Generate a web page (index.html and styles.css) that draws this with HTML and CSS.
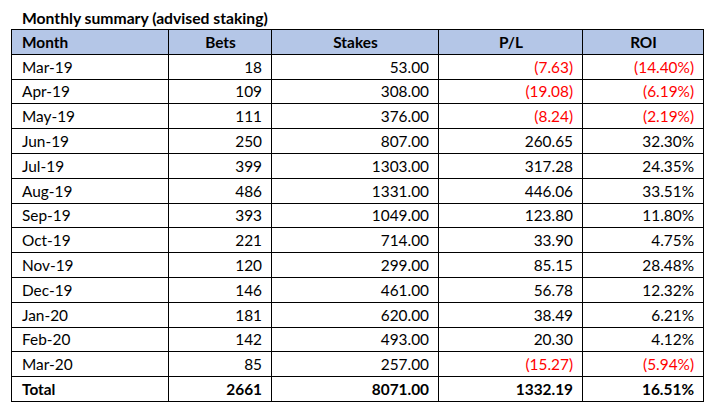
FILE: index.html
```html
<!DOCTYPE html>
<html>
<head>
<meta charset="utf-8">
<link rel="stylesheet" href="styles.css">
</head>
<body>
<div class="sheet">
  <div class="title">Monthly summary (advised staking)</div>
  <div class="table">
    <div class="c h">Month</div><div class="c h">Bets</div><div class="c h">Stakes</div><div class="c h">P/L</div><div class="c h">ROI</div>
    <div class="c l">Mar-19</div><div class="c">18</div><div class="c">53.00</div><div class="c neg">(7.63)</div><div class="c neg">(14.40%)</div>
    <div class="c l">Apr-19</div><div class="c">109</div><div class="c">308.00</div><div class="c neg">(19.08)</div><div class="c neg">(6.19%)</div>
    <div class="c l">May-19</div><div class="c">111</div><div class="c">376.00</div><div class="c neg">(8.24)</div><div class="c neg">(2.19%)</div>
    <div class="c l">Jun-19</div><div class="c">250</div><div class="c">807.00</div><div class="c">260.65</div><div class="c">32.30%</div>
    <div class="c l">Jul-19</div><div class="c">399</div><div class="c">1303.00</div><div class="c">317.28</div><div class="c">24.35%</div>
    <div class="c l">Aug-19</div><div class="c">486</div><div class="c">1331.00</div><div class="c">446.06</div><div class="c">33.51%</div>
    <div class="c l">Sep-19</div><div class="c">393</div><div class="c">1049.00</div><div class="c">123.80</div><div class="c">11.80%</div>
    <div class="c l">Oct-19</div><div class="c">221</div><div class="c">714.00</div><div class="c">33.90</div><div class="c">4.75%</div>
    <div class="c l">Nov-19</div><div class="c">120</div><div class="c">299.00</div><div class="c">85.15</div><div class="c">28.48%</div>
    <div class="c l">Dec-19</div><div class="c">146</div><div class="c">461.00</div><div class="c">56.78</div><div class="c">12.32%</div>
    <div class="c l">Jan-20</div><div class="c">181</div><div class="c">620.00</div><div class="c">38.49</div><div class="c">6.21%</div>
    <div class="c l">Feb-20</div><div class="c">142</div><div class="c">493.00</div><div class="c">20.30</div><div class="c">4.12%</div>
    <div class="c l">Mar-20</div><div class="c">85</div><div class="c">257.00</div><div class="c neg">(15.27)</div><div class="c neg">(5.94%)</div>
    <div class="c l b">Total</div><div class="c b">2661</div><div class="c b">8071.00</div><div class="c b">1332.19</div><div class="c b">16.51%</div>
  </div>
</div>
</body>
</html>
```

FILE: styles.css
```css
html, body {
  margin: 0;
  padding: 0;
  background: #ffffff;
}
body {
  font-family: "Lato", "Open Sans", sans-serif;
  color: #000000;
  font-size: 15.4px;
}
.sheet {
  padding: 8px 0 0 11px;
}
.title {
  font-weight: bold;
  font-size: 15.7px;
  padding-left: 11px;
  height: 21px;
  line-height: 20px;
}
.table {
  display: grid;
  grid-template-columns: 156px 102px 166px 143px 120px;
  grid-auto-rows: 23.8px;
  gap: 1px;
  padding: 1px;
  background: #000000;
  width: max-content;
}
.c {
  background: #ffffff;
  display: flex;
  align-items: center;
  justify-content: flex-end;
  padding: 0 9px 0 10px;
  white-space: nowrap;
}
.c.l {
  justify-content: flex-start;
}
.c.h {
  background: #b4c6e7;
  font-weight: bold;
  justify-content: center;
}
.c.h:first-child {
  justify-content: flex-start;
}
.neg {
  color: #ff0000;
}
.b {
  font-weight: bold;
}
```
